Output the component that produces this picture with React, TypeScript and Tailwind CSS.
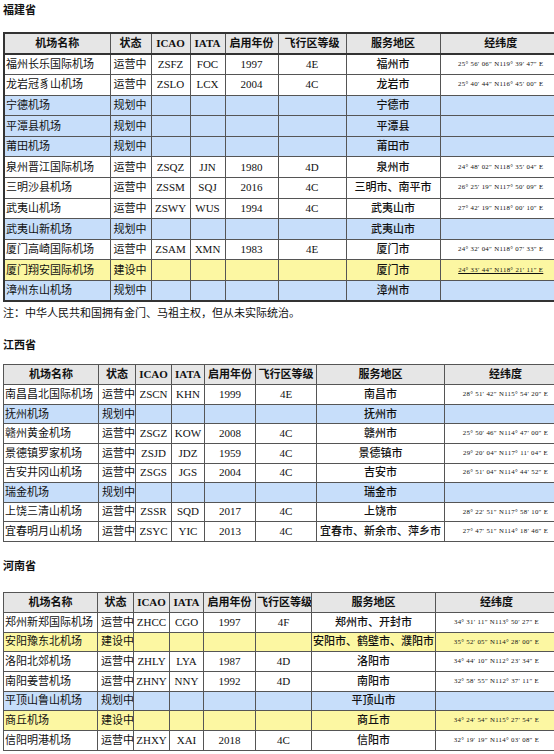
type Status = '运营中' | '规划中' | '建设中';

interface Airport {
  name: string;
  status: Status;
  icao?: string;
  iata?: string;
  year?: string;
  grade?: string;
  region: string;
  coord?: string;
  underline?: boolean;
}

const fujian: Airport[] = [
  { name: '福州长乐国际机场', status: '运营中', icao: 'ZSFZ', iata: 'FOC', year: '1997', grade: '4E', region: '福州市', coord: '25° 56′ 06″ N119° 39′ 47″ E' },
  { name: '龙岩冠豸山机场', status: '运营中', icao: 'ZSLO', iata: 'LCX', year: '2004', grade: '4C', region: '龙岩市', coord: '25° 40′ 44″ N116° 45′ 00″ E' },
  { name: '宁德机场', status: '规划中', region: '宁德市' },
  { name: '平潭县机场', status: '规划中', region: '平潭县' },
  { name: '莆田机场', status: '规划中', region: '莆田市' },
  { name: '泉州晋江国际机场', status: '运营中', icao: 'ZSQZ', iata: 'JJN', year: '1980', grade: '4D', region: '泉州市', coord: '24° 48′ 02″ N118° 35′ 04″ E' },
  { name: '三明沙县机场', status: '运营中', icao: 'ZSSM', iata: 'SQJ', year: '2016', grade: '4C', region: '三明市、南平市', coord: '26° 25′ 19″ N117° 50′ 09″ E' },
  { name: '武夷山机场', status: '运营中', icao: 'ZSWY', iata: 'WUS', year: '1994', grade: '4C', region: '武夷山市', coord: '27° 42′ 19″ N118° 00′ 10″ E' },
  { name: '武夷山新机场', status: '规划中', region: '武夷山市' },
  { name: '厦门高崎国际机场', status: '运营中', icao: 'ZSAM', iata: 'XMN', year: '1983', grade: '4E', region: '厦门市', coord: '24° 32′ 04″ N118° 07′ 33″ E' },
  { name: '厦门翔安国际机场', status: '建设中', region: '厦门市', coord: '24° 33′ 44″ N118° 21′ 11″ E', underline: true },
  { name: '漳州东山机场', status: '规划中', region: '漳州市' },
];

const jiangxi: Airport[] = [
  { name: '南昌昌北国际机场', status: '运营中', icao: 'ZSCN', iata: 'KHN', year: '1999', grade: '4E', region: '南昌市', coord: '28° 51′ 42″ N115° 54′ 20″ E' },
  { name: '抚州机场', status: '规划中', region: '抚州市' },
  { name: '赣州黄金机场', status: '运营中', icao: 'ZSGZ', iata: 'KOW', year: '2008', grade: '4C', region: '赣州市', coord: '25° 50′ 46″ N114° 47′ 00″ E' },
  { name: '景德镇罗家机场', status: '运营中', icao: 'ZSJD', iata: 'JDZ', year: '1959', grade: '4C', region: '景德镇市', coord: '29° 20′ 04″ N117° 11′ 04″ E' },
  { name: '吉安井冈山机场', status: '运营中', icao: 'ZSGS', iata: 'JGS', year: '2004', grade: '4C', region: '吉安市', coord: '26° 51′ 04″ N114° 44′ 52″ E' },
  { name: '瑞金机场', status: '规划中', region: '瑞金市' },
  { name: '上饶三清山机场', status: '运营中', icao: 'ZSSR', iata: 'SQD', year: '2017', grade: '4C', region: '上饶市', coord: '28° 22′ 51″ N117° 58′ 10″ E' },
  { name: '宜春明月山机场', status: '运营中', icao: 'ZSYC', iata: 'YIC', year: '2013', grade: '4C', region: '宜春市、新余市、萍乡市', coord: '27° 47′ 51″ N114° 18′ 46″ E' },
];

const henan: Airport[] = [
  { name: '郑州新郑国际机场', status: '运营中', icao: 'ZHCC', iata: 'CGO', year: '1997', grade: '4F', region: '郑州市、开封市', coord: '34° 31′ 11″ N113° 50′ 27″ E' },
  { name: '安阳豫东北机场', status: '建设中', region: '安阳市、鹤壁市、濮阳市', coord: '35° 52′ 05″ N114° 28′ 00″ E' },
  { name: '洛阳北郊机场', status: '运营中', icao: 'ZHLY', iata: 'LYA', year: '1987', grade: '4D', region: '洛阳市', coord: '34° 44′ 10″ N112° 23′ 34″ E' },
  { name: '南阳姜营机场', status: '运营中', icao: 'ZHNY', iata: 'NNY', year: '1992', grade: '4D', region: '南阳市', coord: '32° 58′ 55″ N112° 37′ 11″ E' },
  { name: '平顶山鲁山机场', status: '规划中', region: '平顶山市' },
  { name: '商丘机场', status: '建设中', region: '商丘市', coord: '34° 24′ 54″ N115° 27′ 54″ E' },
  { name: '信阳明港机场', status: '运营中', icao: 'ZHXY', iata: 'XAI', year: '2018', grade: '4C', region: '信阳市', coord: '32° 19′ 19″ N114° 03′ 08″ E' },
];

const rowBg: Record<Status, string> = {
  运营中: 'bg-white',
  规划中: 'bg-[#c7defa]',
  建设中: 'bg-[#fcf7a2]',
};

interface TableProps {
  rows: Airport[];
  cols: number[];
  headH: string;
  rowH: string;
  thick?: boolean;
}

const cell = 'border border-[#555] px-[1px] whitespace-nowrap overflow-hidden';

function AirportTable({ rows, cols, headH, rowH, thick }: TableProps) {
  return (
    <table
      className={`table-fixed border-collapse text-[11px] leading-none text-[#111] ${thick ? 'border-2 border-[#333]' : 'border border-[#555]'}`}
      style={{ width: cols.reduce((a, b) => a + b, 0) }}
    >
      <colgroup>
        {cols.map((w, i) => (
          <col key={i} style={{ width: w }} />
        ))}
      </colgroup>
      <thead>
        <tr className={`${headH} bg-[#e6e6e6] font-bold`}>
          {['机场名称', '状态', 'ICAO', 'IATA', '启用年份', '飞行区等级', '服务地区', '经纬度'].map((h) => (
            <th key={h} className={`${cell} text-center ${thick ? 'border-b-2 border-b-[#333]' : ''}`}>
              {h}
            </th>
          ))}
        </tr>
      </thead>
      <tbody>
        {rows.map((r) => (
          <tr key={r.name} className={`${rowH} ${rowBg[r.status]}`}>
            <td className={`${cell} text-left`}>{r.name}</td>
            <td className={`${cell} text-left pl-[3px]`}>{r.status}</td>
            <td className={`${cell} text-center`}>{r.icao}</td>
            <td className={`${cell} text-center`}>{r.iata}</td>
            <td className={`${cell} text-center`}>{r.year}</td>
            <td className={`${cell} text-center`}>{r.grade}</td>
            <td className={`${cell} text-center font-medium`}>{r.region}</td>
            <td className={`${cell} text-center text-[6.8px] tracking-[0.3px]`}>
              <span className={r.underline ? 'underline' : ''}>{r.coord}</span>
            </td>
          </tr>
        ))}
      </tbody>
    </table>
  );
}

function Title({ children }: { children: string }) {
  return <div className="pl-[3px] text-[11px] font-bold leading-none text-[#111]">{children}</div>;
}

export default function App() {
  return (
    <div
      className="w-[554px] h-[754px] overflow-hidden bg-white"
      style={{ fontFamily: '"Liberation Serif", "Noto Sans CJK SC", serif' }}
    >
      <div className="pt-[5px]">
        <Title>福建省</Title>
      </div>
      <div className="pt-[16px] pl-[3px]">
        <AirportTable rows={fujian} cols={[106, 41, 39, 35, 53, 68, 94, 122]} headH="h-[21px]" rowH="h-[20.6px]" thick />
      </div>
      <div className="pt-[6px] pl-[3px] text-[11px] leading-none text-[#111]">
        注：中华人民共和国拥有金门、马祖主权，但从未实际统治。
      </div>
      <div className="pt-[21px]">
        <Title>江西省</Title>
      </div>
      <div className="pt-[13px] pl-[3px]">
        <AirportTable rows={jiangxi} cols={[95, 37, 36, 33, 51, 61, 128, 122]} headH="h-[20px]" rowH="h-[19.6px]" />
      </div>
      <div className="pt-[19px]">
        <Title>河南省</Title>
      </div>
      <div className="pt-[20px] pl-[3px]">
        <AirportTable rows={henan} cols={[94, 36, 36, 34, 52, 56, 124, 122]} headH="h-[20px]" rowH="h-[19.7px]" />
      </div>
    </div>
  );
}
